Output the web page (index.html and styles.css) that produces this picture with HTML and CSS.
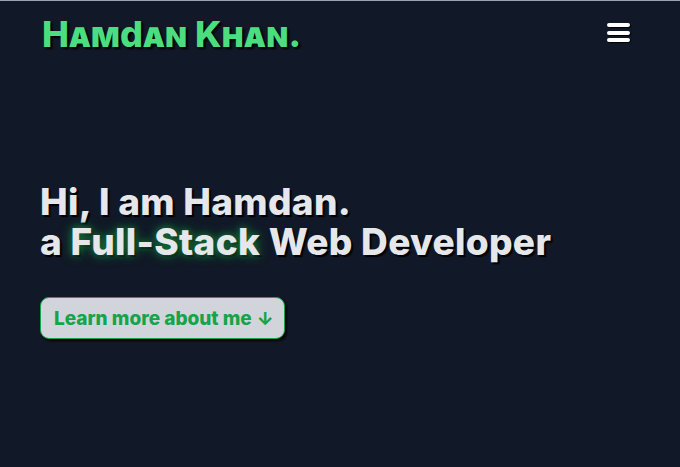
FILE: index.html
```html
<!DOCTYPE html>
<html lang="en">
<head>
<meta charset="utf-8">
<title>Hamdan Khan</title>
<link rel="stylesheet" href="styles.css">
</head>
<body>
<header class="nav">
  <a class="logo" href="#">Hamdan Khan.</a>
  <button class="menu" aria-label="Menu">
    <span class="bar"></span><span class="bar"></span><span class="bar"></span>
  </button>
</header>
<main>
  <section class="hero">
    <h1 class="title"><span class="line">Hi, I am Hamdan.</span><span class="line">a <span class="glow">Full-Stack</span> Web Developer</span></h1>
    <a class="cta" href="#about">Learn more about me <span class="arrow">↓</span></a>
  </section>
  <section id="about" class="about"></section>
</main>
</body>
</html>
```
FILE: styles.css
```css
html, body {
  margin: 0;
  padding: 0;
  background: #111827;
}
body {
  font-family: "Inter", "Lato", sans-serif;
  color: #e5e7eb;
  border-top: 1px solid #9ca3af;
}
.nav {
  display: flex;
  justify-content: space-between;
  align-items: center;
  padding: 10px 50px 0 42px;
  height: 46px;
}
.logo {
  font-size: 36px;
  font-weight: 800;
  font-variant: small-caps;
  letter-spacing: -0.3px;
  color: #4ade80;
  text-decoration: none;
  text-shadow: 2px 2px 2px #000;
}
.menu {
  display: flex;
  flex-direction: column;
  gap: 3.5px;
  background: none;
  border: 0;
  padding: 0;
  margin-top: -3px;
}
.bar {
  display: block;
  width: 23px;
  height: 4px;
  border-radius: 2px;
  background: #fff;
  box-shadow: 1px 1px 1px #000;
}
.hero {
  padding: 125px 40px 0 40px;
}
.title {
  margin: 0;
  font-size: 37px;
  line-height: 40px;
  font-weight: 800;
  letter-spacing: 0.3px;
  color: #e5e7eb;
  text-shadow: 2px 2px 1px #000;
}
.line {
  display: block;
  height: 40px;
}
.glow {
  color: #e5e7eb;
  text-shadow: 0 0 6px #166534, 0 0 12px #15803d, 2px 2px 1px #000;
}
.cta {
  display: inline-flex;
  align-items: center;
  margin-top: 35px;
  height: 40px;
  padding: 0 10px 0 13px;
  background: #d1d5db;
  border: 1px solid #16a34a;
  border-radius: 9px;
  color: #16a34a;
  font-size: 19px;
  font-weight: 800;
  text-decoration: none;
  box-shadow: 2px 2px 2px #000;
}
.arrow {
  margin-left: 5px;
  font-size: 18px;
}
.about {
  height: 200px;
}
```
